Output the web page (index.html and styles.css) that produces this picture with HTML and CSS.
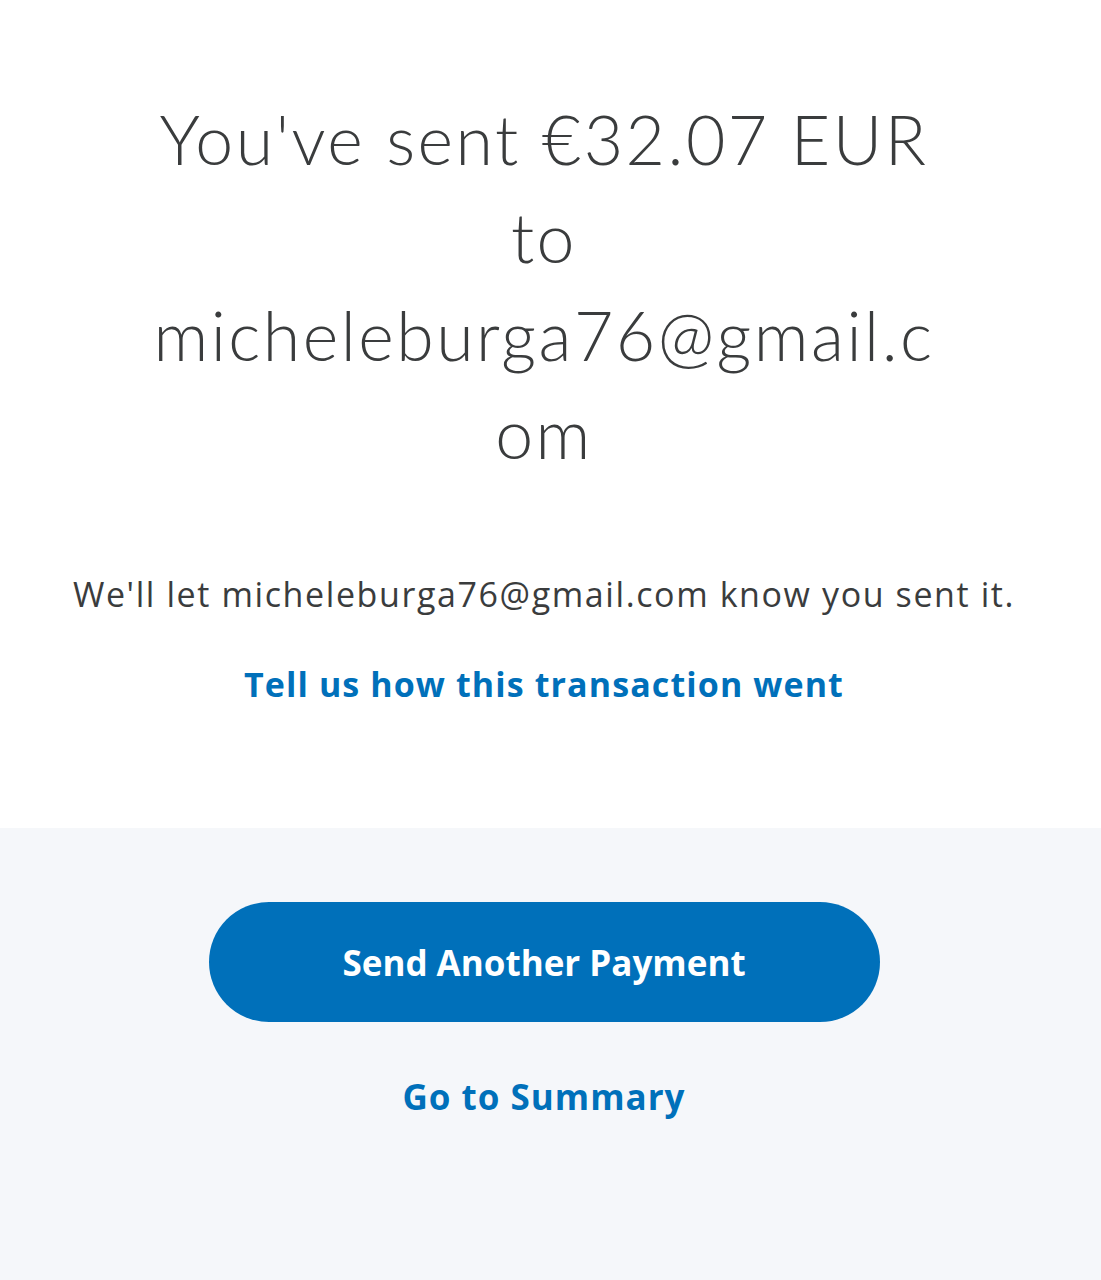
FILE: index.html
```html
<!DOCTYPE html>
<html lang="en">
<head>
    <meta charset="UTF-8">
    <meta name="viewport" content="width=device-width, initial-scale=1.0">
    <title>Payment sent</title>
    <link rel="stylesheet" href="styles.css">
</head>
<body>
    <section class="summary">
        <h1 class="title">You've sent €32.07 EUR to micheleburga76@gmail.com</h1>
        <p class="notice">We'll let micheleburga76@gmail.com know you sent it.</p>
        <a class="feedback" href="#">Tell us how this transaction went</a>
    </section>

    <section class="actions">
        <button class="primary-btn">Send Another Payment</button>
        <a class="secondary-link" href="#">Go to Summary</a>
    </section>
</body>
</html>
```

FILE: styles.css
```css
body {
    font-family: 'Open Sans', 'Liberation Sans', sans-serif;
    background-color: #f5f7fa;
    color: #2c2e2f;
    margin: 0;
    padding: 0;
    text-align: center;
}

.summary {
    background: white;
    height: 828px;
    box-sizing: border-box;
    padding: 90px 13px 0 0;
    display: flex;
    flex-direction: column;
    align-items: center;
}

.title {
    width: 795px;
    margin: 0;
    font-family: 'Lato', 'Liberation Sans', sans-serif;
    font-size: 68px;
    font-weight: 300;
    letter-spacing: 2.5px;
    line-height: 98px;
    color: #3a3c3d;
    overflow-wrap: break-word;
}

.notice {
    margin: 92px 0 0;
    font-size: 34px;
    letter-spacing: 1.6px;
    line-height: 40px;
    color: #3a3c3d;
}

.feedback {
    margin-top: 50px;
    font-size: 34px;
    line-height: 40px;
    font-weight: 700;
    letter-spacing: 1.1px;
    color: #0070ba;
    text-decoration: none;
}

.actions {
    padding: 74px 13px 0 0;
    display: flex;
    flex-direction: column;
    align-items: center;
    min-height: 452px;
    box-sizing: border-box;
}

.primary-btn {
    width: 671px;
    height: 120px;
    border: none;
    border-radius: 60px;
    background-color: #0070ba;
    color: white;
    font-family: inherit;
    font-size: 35px;
    font-weight: 700;
    cursor: pointer;
}

.secondary-link {
    margin-top: 55px;
    font-size: 35px;
    line-height: 40px;
    font-weight: 700;
    letter-spacing: 1px;
    color: #0070ba;
    text-decoration: none;
}
```
